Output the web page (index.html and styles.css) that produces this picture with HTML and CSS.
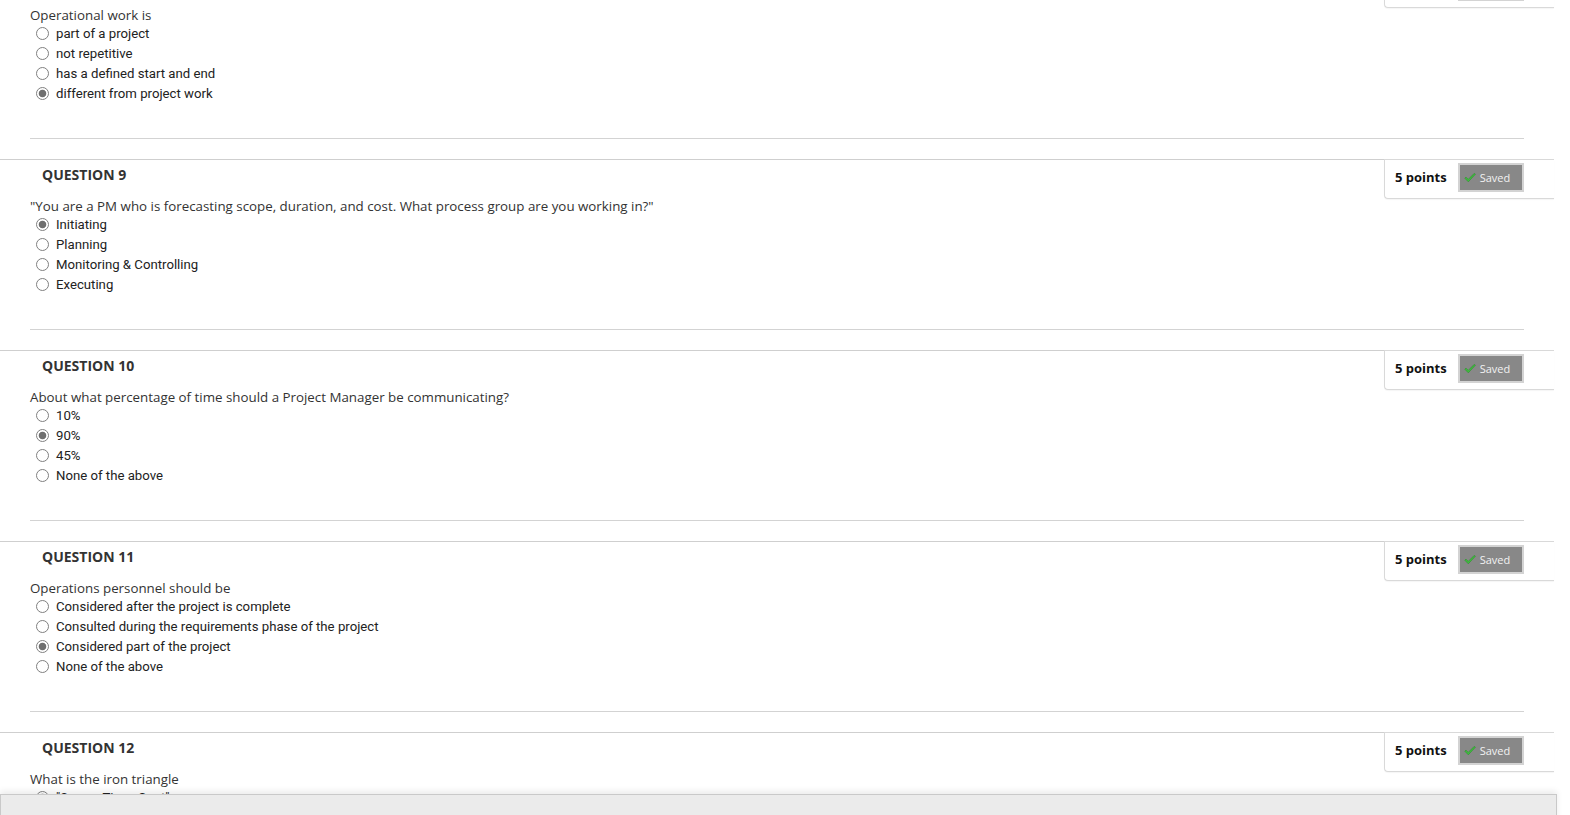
FILE: index.html
```html
<!DOCTYPE html>
<html lang="en">
<head>
<meta charset="utf-8">
<title>Quiz</title>
<link rel="stylesheet" href="styles.css">
</head>
<body>
<div class="page">

  <section class="q q-first">
    <div class="q-head">
      <h3 class="q-title">QUESTION 8</h3>
      <div class="points"><span class="pts">5 points</span><span class="saved"><svg class="chk" viewBox="0 0 12 10" width="12" height="10"><path d="M0.8 5.2 L4.3 8.8 L11.4 1.2 L10.2 0.4 L4.2 6.4 L2 4.1 Z" fill="#3fbf3f" stroke="#2a8f2a" stroke-width="0.6"/></svg>Saved</span></div>
    </div>
    <div class="q-body">
      <p class="q-text">Operational work is</p>
      <ul class="opts">
        <li><input type="radio" name="q8"><label>part of a project</label></li>
        <li><input type="radio" name="q8"><label>not repetitive</label></li>
        <li><input type="radio" name="q8"><label>has a defined start and end</label></li>
        <li><input type="radio" name="q8" checked><label>different from project work</label></li>
      </ul>
      <hr class="sep">
    </div>
  </section>

  <section class="q">
    <div class="q-head">
      <h3 class="q-title">QUESTION 9</h3>
      <div class="points"><span class="pts">5 points</span><span class="saved"><svg class="chk" viewBox="0 0 12 10" width="12" height="10"><path d="M0.8 5.2 L4.3 8.8 L11.4 1.2 L10.2 0.4 L4.2 6.4 L2 4.1 Z" fill="#3fbf3f" stroke="#2a8f2a" stroke-width="0.6"/></svg>Saved</span></div>
    </div>
    <div class="q-body">
      <p class="q-text">"You are a PM who is forecasting scope, duration, and cost. What process group are you working in?"</p>
      <ul class="opts">
        <li><input type="radio" name="q9" checked><label>Initiating</label></li>
        <li><input type="radio" name="q9"><label>Planning</label></li>
        <li><input type="radio" name="q9"><label>Monitoring &amp; Controlling</label></li>
        <li><input type="radio" name="q9"><label>Executing</label></li>
      </ul>
      <hr class="sep">
    </div>
  </section>

  <section class="q">
    <div class="q-head">
      <h3 class="q-title">QUESTION 10</h3>
      <div class="points"><span class="pts">5 points</span><span class="saved"><svg class="chk" viewBox="0 0 12 10" width="12" height="10"><path d="M0.8 5.2 L4.3 8.8 L11.4 1.2 L10.2 0.4 L4.2 6.4 L2 4.1 Z" fill="#3fbf3f" stroke="#2a8f2a" stroke-width="0.6"/></svg>Saved</span></div>
    </div>
    <div class="q-body">
      <p class="q-text">About what percentage of time should a Project Manager be communicating?</p>
      <ul class="opts">
        <li><input type="radio" name="q10"><label>10%</label></li>
        <li><input type="radio" name="q10" checked><label>90%</label></li>
        <li><input type="radio" name="q10"><label>45%</label></li>
        <li><input type="radio" name="q10"><label>None of the above</label></li>
      </ul>
      <hr class="sep">
    </div>
  </section>

  <section class="q">
    <div class="q-head">
      <h3 class="q-title">QUESTION 11</h3>
      <div class="points"><span class="pts">5 points</span><span class="saved"><svg class="chk" viewBox="0 0 12 10" width="12" height="10"><path d="M0.8 5.2 L4.3 8.8 L11.4 1.2 L10.2 0.4 L4.2 6.4 L2 4.1 Z" fill="#3fbf3f" stroke="#2a8f2a" stroke-width="0.6"/></svg>Saved</span></div>
    </div>
    <div class="q-body">
      <p class="q-text">Operations personnel should be</p>
      <ul class="opts">
        <li><input type="radio" name="q11"><label>Considered after the project is complete</label></li>
        <li><input type="radio" name="q11"><label>Consulted during the requirements phase of the project</label></li>
        <li><input type="radio" name="q11" checked><label>Considered part of the project</label></li>
        <li><input type="radio" name="q11"><label>None of the above</label></li>
      </ul>
      <hr class="sep">
    </div>
  </section>

  <section class="q">
    <div class="q-head">
      <h3 class="q-title">QUESTION 12</h3>
      <div class="points"><span class="pts">5 points</span><span class="saved"><svg class="chk" viewBox="0 0 12 10" width="12" height="10"><path d="M0.8 5.2 L4.3 8.8 L11.4 1.2 L10.2 0.4 L4.2 6.4 L2 4.1 Z" fill="#3fbf3f" stroke="#2a8f2a" stroke-width="0.6"/></svg>Saved</span></div>
    </div>
    <div class="q-body">
      <p class="q-text">What is the iron triangle</p>
      <ul class="opts">
        <li><input type="radio" name="q12" checked><label>"Scope, Time, Cost"</label></li>
        <li><input type="radio" name="q12"><label>"Quality, Risk, Resources"</label></li>
        <li><input type="radio" name="q12"><label>"Time, Money, People"</label></li>
        <li><input type="radio" name="q12"><label>None of the above</label></li>
      </ul>
      <hr class="sep">
    </div>
  </section>

</div>
<div class="footer-bar"></div>
</body>
</html>
```
FILE: styles.css
```css
html, body {
  margin: 0;
  padding: 0;
  background: #ffffff;
  overflow: hidden;
}
body {
  font-family: "Open Sans", "Liberation Sans", sans-serif;
  color: #333333;
}
.page {
  width: 1554px;
}
.q {
  border-top: 1px solid #cfcfcf;
  margin-bottom: 20px;
}
.q-first {
  margin-top: -32px;
}
.q-head {
  display: flex;
  justify-content: space-between;
  align-items: flex-start;
  height: 37px;
}
.q-title {
  margin: 5px 0 0 42px;
  font-size: 14px;
  font-weight: 700;
  line-height: 20px;
  color: #333333;
}
.points {
  box-sizing: border-box;
  width: 170px;
  height: 40px;
  margin-top: -1px;
  border: 1px solid #d9d9d9;
  border-right: none;
  border-bottom-left-radius: 4px;
  box-shadow: 0 1px 1px rgba(0,0,0,0.04);
  background: #fff;
  display: flex;
  align-items: flex-start;
  padding: 3px 0 0 10px;
  position: relative;
  z-index: 1;
}
.pts {
  font-size: 13px;
  font-weight: 700;
  line-height: 29px;
  color: #111111;
}
.saved {
  box-sizing: border-box;
  margin-left: 11px;
  width: 66px;
  height: 29px;
  border: 2px solid #d3d3d3;
  background: #888888;
  color: #f2f2f2;
  font-size: 11px;
  display: flex;
  align-items: center;
  padding-left: 4px;
  gap: 4px;
}
.chk {
  display: block;
}
.q-body {
  padding: 0 30px;
}
.q-text {
  margin: 0;
  font-size: 13.33px;
  line-height: 17px;
  color: #333333;
  padding-top: 1px;
  height: 17px;
  box-sizing: border-box;
}
.opts {
  list-style: none;
  margin: 0;
  padding: 0 0 0 6px;
}
.opts li {
  display: flex;
  align-items: center;
  height: 20px;
  font-family: "Roboto", "Liberation Sans", sans-serif;
  font-size: 13.2px;
  color: #222222;
}
.opts input {
  -webkit-appearance: none;
  appearance: none;
  box-sizing: border-box;
  width: 13px;
  height: 13px;
  margin: 0 7px 0 0;
  border: 1px solid #808080;
  border-radius: 50%;
  background: #ffffff;
}
.opts input:checked {
  background: radial-gradient(circle, #6e6e6e 0, #6e6e6e 3.4px, #ffffff 4.2px);
}
.sep {
  margin: 35px 0 0 0;
  border: none;
  border-top: 1px solid #d3d3d3;
  height: 0;
}
.footer-bar {
  position: fixed;
  left: 0;
  top: 794px;
  width: 1555px;
  height: 40px;
  background: #ebebeb;
  border: 1px solid #c9c9c9;
  box-shadow: 0 -3px 6px rgba(0,0,0,0.08);
  z-index: 5;
}
```
